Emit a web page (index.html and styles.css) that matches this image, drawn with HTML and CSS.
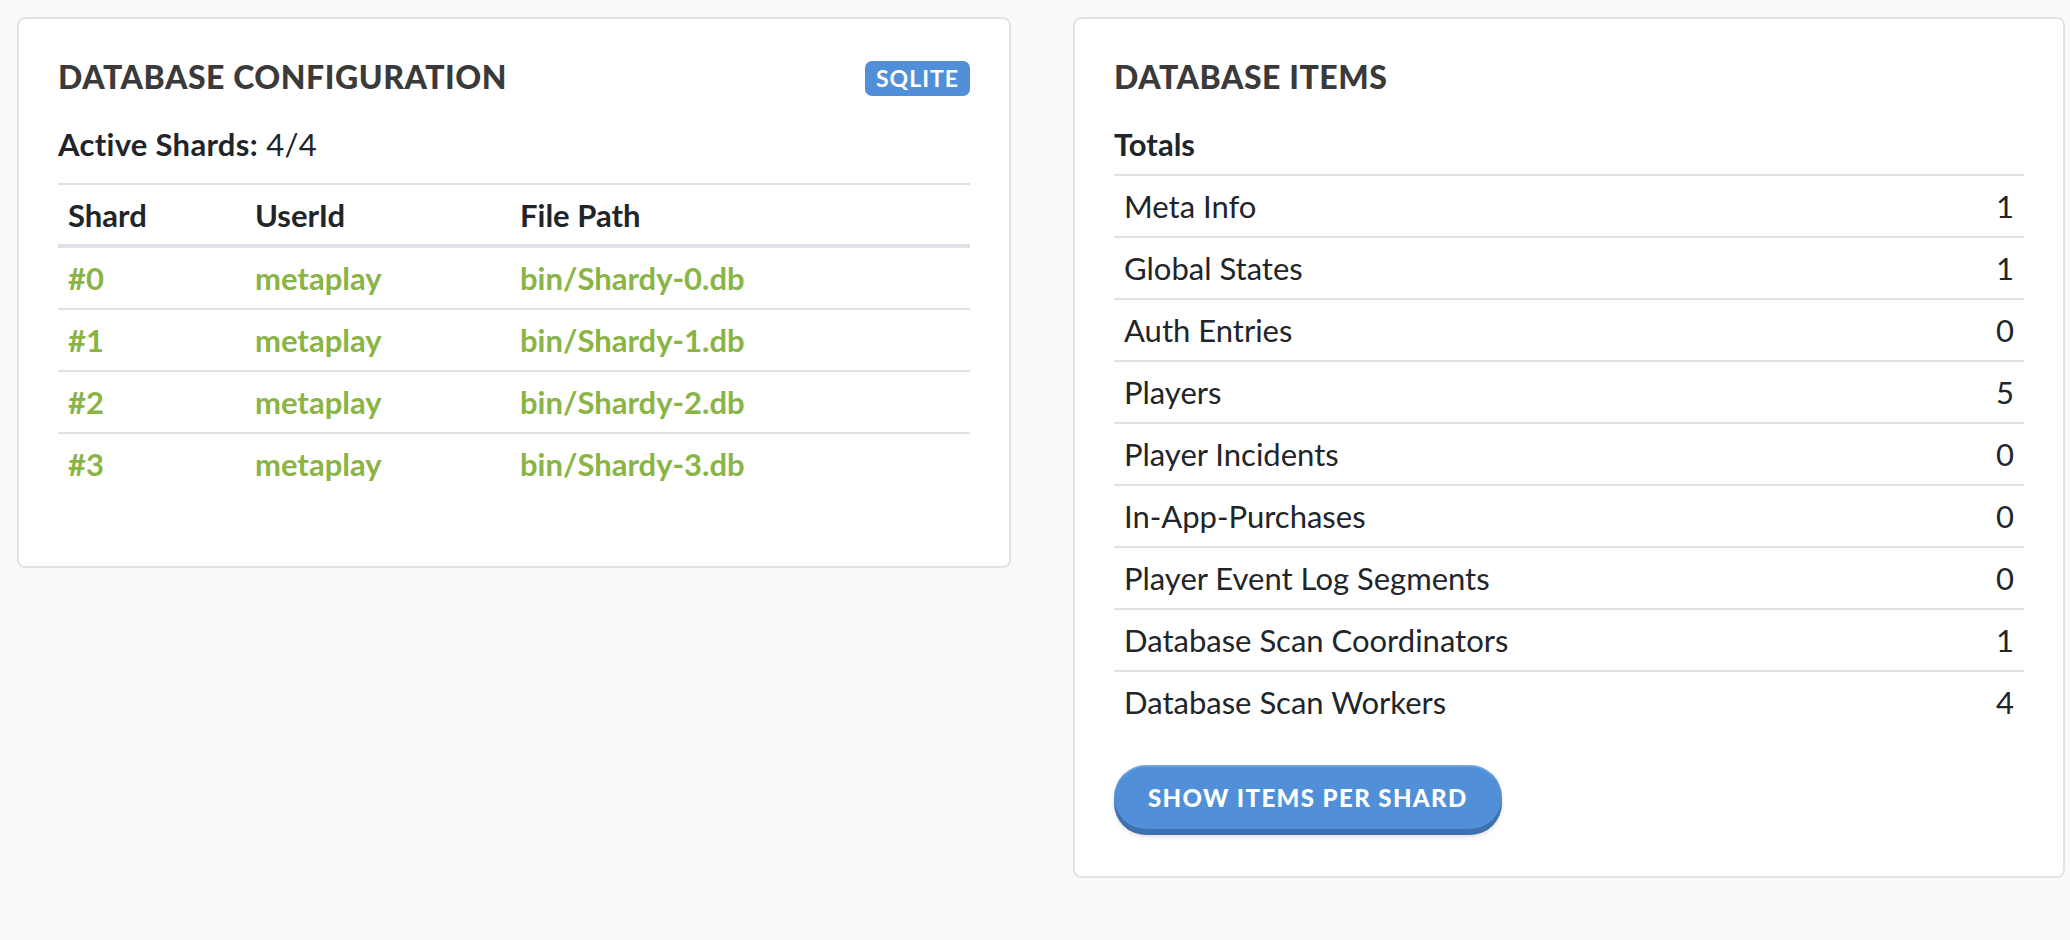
FILE: index.html
```html
<!DOCTYPE html>
<html lang="en">
<head>
<meta charset="utf-8">
<title>Database</title>
<link rel="stylesheet" href="styles.css">
</head>
<body>
<div class="page">
  <section class="card">
    <div class="card-head">
      <h2 class="card-title">DATABASE CONFIGURATION</h2>
      <span class="badge">SQLITE</span>
    </div>
    <p class="summary summary-shards"><strong>Active Shards:</strong> 4/4</p>
    <table class="table shards">
      <thead>
        <tr><th class="col-shard">Shard</th><th class="col-user">UserId</th><th>File Path</th></tr>
      </thead>
      <tbody>
        <tr><td>#0</td><td>metaplay</td><td>bin/Shardy-0.db</td></tr>
        <tr><td>#1</td><td>metaplay</td><td>bin/Shardy-1.db</td></tr>
        <tr><td>#2</td><td>metaplay</td><td>bin/Shardy-2.db</td></tr>
        <tr><td>#3</td><td>metaplay</td><td>bin/Shardy-3.db</td></tr>
      </tbody>
    </table>
  </section>

  <section class="card">
    <div class="card-head">
      <h2 class="card-title">DATABASE ITEMS</h2>
    </div>
    <p class="summary summary-totals"><strong>Totals</strong></p>
    <table class="table items">
      <tbody>
        <tr><td>Meta Info</td><td class="num">1</td></tr>
        <tr><td>Global States</td><td class="num">1</td></tr>
        <tr><td>Auth Entries</td><td class="num">0</td></tr>
        <tr><td>Players</td><td class="num">5</td></tr>
        <tr><td>Player Incidents</td><td class="num">0</td></tr>
        <tr><td>In-App-Purchases</td><td class="num">0</td></tr>
        <tr><td>Player Event Log Segments</td><td class="num">0</td></tr>
        <tr><td>Database Scan Coordinators</td><td class="num">1</td></tr>
        <tr><td>Database Scan Workers</td><td class="num">4</td></tr>
      </tbody>
    </table>
    <button class="btn" type="button">SHOW ITEMS PER SHARD</button>
  </section>
</div>
</body>
</html>
```

FILE: styles.css
```css
html, body {
  margin: 0;
  padding: 0;
  background: #f9f9f9;
}

body {
  font-family: "Lato", "Open Sans", "Liberation Sans", sans-serif;
  font-size: 31px;
  color: #212529;
}

.page {
  display: grid;
  grid-template-columns: 994px 992px;
  column-gap: 62px;
  align-items: start;
  padding: 17px 0 0 17px;
}

.card {
  background: #ffffff;
  border: 2px solid #e3e3e3;
  border-radius: 8px;
  padding: 39px;
}

.card-head {
  display: flex;
  align-items: center;
  justify-content: space-between;
  height: 38px;
}

.card-title {
  margin: 0;
  font-size: 32px;
  line-height: 38px;
  font-weight: 900;
  color: #3a3a3a;
  letter-spacing: 0.55px;
}

.badge {
  display: inline-block;
  height: 35px;
  line-height: 35px;
  padding: 0 11px;
  border-radius: 7px;
  background: #5190d8;
  color: #ffffff;
  font-size: 23px;
  font-weight: 700;
  letter-spacing: 1px;
  margin-top: 2px;
}

.summary {
  margin: 0;
  line-height: 45px;
}

.summary strong {
  font-weight: 700;
}

.summary-shards {
  margin-top: 26px;
  margin-bottom: 16px;
  letter-spacing: 0.3px;
}

.summary-totals {
  margin-top: 26px;
  margin-bottom: 7px;
}

.table {
  width: 100%;
  border-collapse: separate;
  border-spacing: 0;
  margin-bottom: 33px;
}

.table th,
.table td {
  padding: 10px 10px;
  line-height: 40px;
  text-align: left;
  border-top: 2px solid #dee2e6;
}

.table th {
  font-weight: 700;
  border-bottom: 4px solid #dee2e6;
  padding-bottom: 9px;
}

.shards tbody tr:first-child td {
  border-top: none;
}

.shards .col-shard {
  width: 167px;
}

.shards .col-user {
  width: 245px;
}

.shards td {
  color: #8ab446;
  font-weight: 700;
}

.items .num {
  text-align: right;
}

.btn {
  display: inline-block;
  height: 64px;
  padding: 0 34px;
  border: none;
  border-radius: 32px;
  background: #5190d8;
  color: #ffffff;
  font-family: inherit;
  font-size: 24px;
  font-weight: 900;
  letter-spacing: 1.4px;
  box-shadow: inset 0 2px 0 rgba(255, 255, 255, 0.18), 0 6px 0 #3e70b0, 0 8px 4px rgba(0, 0, 0, 0.12);
  margin-bottom: 8px;
  cursor: pointer;
}
```
